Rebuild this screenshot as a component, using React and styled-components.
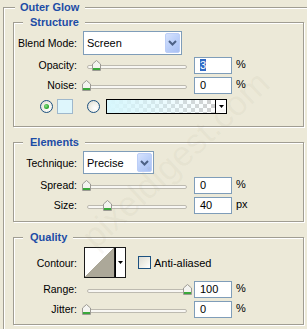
import React from "react";
import styled, { createGlobalStyle } from "styled-components";

const Global = createGlobalStyle`
  html, body {
    margin: 0;
    padding: 0;
    background: #ece9d8;
    overflow: hidden;
  }
  body {
    font-family: "Liberation Sans", Arial, sans-serif;
    font-size: 11px;
    color: #000;
  }
`;

const Page = styled.div`
  position: relative;
  width: 307px;
  height: 329px;
  overflow: hidden;
`;

const Frame = styled.div`
  position: relative;
  box-sizing: border-box;
  margin: 7px 0 0 3px;
  width: 340px;
  height: 340px;
  border: 1px solid #a09d92;
  box-shadow: inset 1px 1px 0 #fff;
  padding: 14px 0 0 9px;
`;

const Group = styled.div`
  position: relative;
  box-sizing: border-box;
  width: 291px;
  height: ${(p) => p.h}px;
  margin-top: ${(p) => p.mt || 0}px;
  border: 1px solid #a09d92;
  box-shadow: inset 1px 1px 0 #fff, 1px 1px 0 #fff;
  padding-top: ${(p) => p.pt || 0}px;
`;

const Legend = styled.span`
  position: absolute;
  top: -8px;
  left: ${(p) => p.left || 9}px;
  padding: 0 6px 0 ${(p) => p.pl || 7}px;
  background: #ece9d8;
  color: #1c4ca6;
  font-weight: bold;
  font-size: 11px;
  line-height: 14px;
`;

const Row = styled.div`
  display: flex;
  align-items: center;
  height: ${(p) => p.h || 20}px;
  margin-top: ${(p) => p.mt || 0}px;
`;

const Label = styled.div`
  width: 63px;
  margin-right: 6px;
  text-align: right;
  white-space: nowrap;
  font-size: 10.5px;
`;

const Select = styled.div`
  box-sizing: border-box;
  display: flex;
  align-items: center;
  width: ${(p) => p.w}px;
  height: ${(p) => p.h}px;
  padding-left: 3px;
  border: 1px solid #7f9db9;
  background: #fff;
  font-size: 11px;
`;

const DropBtn = styled.div`
  display: flex;
  align-items: center;
  justify-content: center;
  margin-left: auto;
  margin-right: 1px;
  width: 15px;
  height: calc(100% - 2px);
  border-radius: 2px;
  background: linear-gradient(135deg, #d6e2fd 0%, #bcd0f9 50%, #a9c0f3 100%);
  border: 1px solid #bccef7;
  box-sizing: border-box;
`;

const SliderBox = styled.div`
  position: relative;
  width: 111px;
  height: 20px;
`;

const Track = styled.div`
  position: absolute;
  left: 4px;
  top: 10px;
  box-sizing: border-box;
  width: 100px;
  height: 4px;
  border: 1px solid #bdbab0;
  border-radius: 2px;
  background: #f8f7f3;
`;

const Thumb = styled.svg`
  position: absolute;
  top: 5px;
`;

const Field = styled.div`
  box-sizing: border-box;
  width: 38px;
  height: 17px;
  padding-left: 5px;
  border: 1px solid #7f9db9;
  background: #fff;
  line-height: 15px;
`;

const Selected = styled.span`
  background: #316ac5;
  color: #fff;
`;

const Unit = styled.span`
  margin-left: 4px;
  margin-top: -3px;
`;

const Radio = styled.div`
  box-sizing: border-box;
  display: flex;
  align-items: center;
  justify-content: center;
  width: 13px;
  height: 13px;
  margin-left: ${(p) => p.ml || 0}px;
  border-radius: 50%;
  border: 1px solid #1c5180;
  background: radial-gradient(circle at 65% 65%, #fff 0%, #f2f1ea 45%, #d8d6cb 100%);

  &::after {
    content: "";
    display: ${(p) => (p.checked ? "block" : "none")};
    width: 5px;
    height: 5px;
    border-radius: 50%;
    background: radial-gradient(circle at 40% 40%, #8be18b 0%, #2fa82f 60%, #1f8b1f 100%);
  }
`;

const Swatch = styled.div`
  box-sizing: border-box;
  width: 16px;
  height: 15px;
  margin-left: 4px;
  border: 1px solid #9fb8cc;
  background: #def6fc;
`;

const GradPicker = styled.div`
  box-sizing: border-box;
  display: flex;
  width: 121px;
  height: 15px;
  margin-left: 6px;
  border: 1px solid #000;
  background: #fff;
`;

const GradFill = styled.div`
  flex: 1;
  background:
    linear-gradient(90deg, #d7f7fd 0%, rgba(215, 247, 253, 0.6) 45%, rgba(215, 247, 253, 0) 100%),
    repeating-conic-gradient(#cfcfcf 0% 25%, #fff 0% 50%) 0 0 / 8px 8px;
`;

const ArrowCell = styled.div`
  display: flex;
  align-items: center;
  justify-content: center;
  width: 10px;
  border-left: 1px solid #000;
  background: #fff;
`;

const ContourBox = styled.div`
  box-sizing: border-box;
  display: flex;
  width: 42px;
  height: 31px;
  margin-left: 1px;
  border: 1px solid #1a1a1a;
  background: #fff;
`;

const ContourPreview = styled.div`
  width: 30px;
  border-right: 1px solid #1a1a1a;
  background: linear-gradient(to top left, #aca899 50%, #fff 50%);
`;

const Check = styled.div`
  box-sizing: border-box;
  width: 13px;
  height: 13px;
  margin-left: 12px;
  border: 1px solid #1c5180;
  background: linear-gradient(135deg, #dcdbd5 0%, #eeede5 50%, #fff 100%);
`;

const CheckLabel = styled.span`
  margin-left: 3px;
`;

const Watermark = styled.div`
  position: absolute;
  left: 55px;
  top: 140px;
  width: 240px;
  text-align: center;
  transform: rotate(-43deg);
  font-size: 35px;
  font-family: "Liberation Sans", Arial, sans-serif;
  color: rgba(150, 140, 110, 0.07);
  pointer-events: none;
  white-space: nowrap;
`;

const Chevron = () => (
  <svg width="9" height="6" viewBox="0 0 9 6">
    <path d="M1 1 L4.5 4.5 L8 1" fill="none" stroke="#4d6185" strokeWidth="2" />
  </svg>
);

const SmallArrow = () => (
  <svg width="5" height="4" viewBox="0 0 5 4">
    <path d="M0 0 H5 L2.5 3 Z" fill="#000" />
  </svg>
);

const Slider = ({ pos }) => (
  <SliderBox>
    <Track />
    <Thumb width="9" height="11" viewBox="0 0 9 11" style={{ left: pos }}>
      <path d="M0.5 4 L4.5 0.5 L8.5 4 V10.5 H0.5 Z" fill="#f4f4f0" stroke="#9c9a94" />
      <rect x="1" y="8" width="7" height="2" fill="#3aa83a" />
    </Thumb>
  </SliderBox>
);

const SliderRow = ({ label, pos, value, unit, mt, selected }) => (
  <Row mt={mt}>
    <Label>{label}</Label>
    <Slider pos={pos} />
    <Field>{selected ? <Selected>{value}</Selected> : value}</Field>
    <Unit>{unit}</Unit>
  </Row>
);

export default function App() {
  return (
    <Page>
      <Global />
      <Frame>
        <Legend left={11} pl={5}>Outer Glow</Legend>
        <Group h={105} pt={8}>
          <Legend>Structure</Legend>
          <Row h={24}>
            <Label>Blend Mode:</Label>
            <Select w={99} h={24}>
              Screen
              <DropBtn><Chevron /></DropBtn>
            </Select>
          </Row>
          <SliderRow label="Opacity:" pos={9} value="3" unit="%" selected />
          <SliderRow label="Noise:" pos={-1} value="0" unit="%" />
          <Row h={15} mt={4}>
            <Radio ml={26} checked />
            <Swatch />
            <Radio ml={14} />
            <GradPicker>
              <GradFill />
              <ArrowCell><SmallArrow /></ArrowCell>
            </GradPicker>
          </Row>
        </Group>
        <Group h={80} mt={15} pt={8}>
          <Legend>Elements</Legend>
          <Row h={23}>
            <Label>Technique:</Label>
            <Select w={71} h={23}>
              Precise
              <DropBtn><Chevron /></DropBtn>
            </Select>
          </Row>
          <SliderRow label="Spread:" pos={-1} value="0" unit="%" mt={1} />
          <SliderRow label="Size:" pos={20} value="40" unit="px" />
        </Group>
        <Group h={88} mt={15} pt={9}>
          <Legend>Quality</Legend>
          <Row h={31}>
            <Label>Contour:</Label>
            <ContourBox>
              <ContourPreview />
              <ArrowCell><SmallArrow /></ArrowCell>
            </ContourBox>
            <Check />
            <CheckLabel>Anti-aliased</CheckLabel>
          </Row>
          <SliderRow label="Range:" pos={100} value="100" unit="%" mt={1} />
          <SliderRow label="Jitter:" pos={-1} value="0" unit="%" />
        </Group>
      </Frame>
      <Watermark>pixeldigest.com</Watermark>
    </Page>
  );
}
